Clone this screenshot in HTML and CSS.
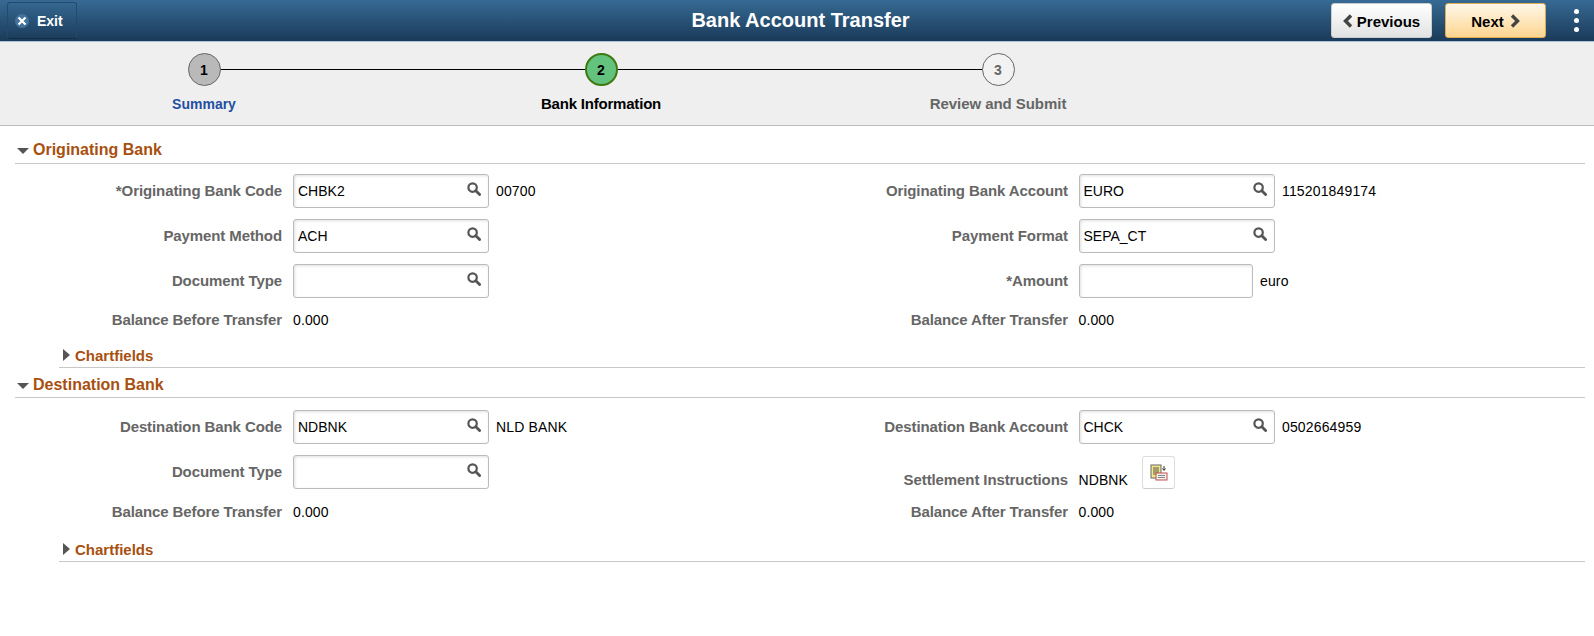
FILE: index.html
```html
<!doctype html>
<html>
<head>
  <title>Bank Account Transfer</title>
  <link rel="stylesheet" href="styles.css">
</head>
<body>
  <svg class="defs" width="0" height="0">
    <symbol id="search" viewBox="0 0 14 14">
      <circle cx="5.6" cy="5.6" r="4.2" fill="none" stroke="#555" stroke-width="2.2"></circle>
      <path d="M8.8 8.8 L12.6 12.6" stroke="#555" stroke-width="2.8" stroke-linecap="round"></path>
    </symbol>
  </svg>

  <div class="banner">
    <a class="exit">
      <span class="exit-icon">
        <svg width="10" height="10" viewBox="0 0 10 10"><path d="M1.5 1.5 L8.5 8.5 M8.5 1.5 L1.5 8.5" stroke="#fff" stroke-width="2.2"></path></svg>
      </span>
      Exit
    </a>
    <div class="page-title">Bank Account Transfer</div>
    <div class="banner-right">
      <a class="btn btn-prev">
        <svg width="10" height="14" viewBox="0 0 10 14"><path d="M8 1.5 L2.5 7 L8 12.5" fill="none" stroke="#444" stroke-width="3.4"></path></svg>
        Previous
      </a>
      <a class="btn btn-next">
        Next
        <svg width="10" height="14" viewBox="0 0 10 14"><path d="M2 1.5 L7.5 7 L2 12.5" fill="none" stroke="#444" stroke-width="3.4"></path></svg>
      </a>
      <div class="dots"><i></i><i></i><i></i></div>
    </div>
  </div>

  <div class="train">
    <div class="step step-done">
      <div class="bubble">1</div>
      <div class="step-label">Summary</div>
    </div>
    <div class="step step-current">
      <div class="bubble">2</div>
      <div class="step-label">Bank Information</div>
    </div>
    <div class="step step-next">
      <div class="bubble">3</div>
      <div class="step-label">Review and Submit</div>
    </div>
  </div>

  <div class="section">
    <h2 class="section-head"><span class="arrow-down"></span>Originating Bank</h2>
    <div class="fields">
      <div class="field">
        <label>*Originating Bank Code</label>
        <div class="prompt"><span>CHBK2</span><svg><use href="#search"></use></svg></div>
        <span class="value">00700</span>
      </div>
      <div class="field">
        <label>Originating Bank Account</label>
        <div class="prompt"><span>EURO</span><svg><use href="#search"></use></svg></div>
        <span class="value">115201849174</span>
      </div>
      <div class="field">
        <label>Payment Method</label>
        <div class="prompt"><span>ACH</span><svg><use href="#search"></use></svg></div>
      </div>
      <div class="field">
        <label>Payment Format</label>
        <div class="prompt"><span>SEPA_CT</span><svg><use href="#search"></use></svg></div>
      </div>
      <div class="field">
        <label>Document Type</label>
        <div class="prompt"><span></span><svg><use href="#search"></use></svg></div>
      </div>
      <div class="field">
        <label>*Amount</label>
        <div class="prompt prompt-amount"></div>
        <span class="value">euro</span>
      </div>
      <div class="field field-short">
        <label>Balance Before Transfer</label>
        <span class="text">0.000</span>
      </div>
      <div class="field field-short">
        <label>Balance After Transfer</label>
        <span class="text">0.000</span>
      </div>
    </div>
    <div class="sub-head"><span class="arrow-right"></span>Chartfields</div>
  </div>

  <div class="section">
    <h2 class="section-head"><span class="arrow-down"></span>Destination Bank</h2>
    <div class="fields">
      <div class="field">
        <label>Destination Bank Code</label>
        <div class="prompt"><span>NDBNK</span><svg><use href="#search"></use></svg></div>
        <span class="value">NLD BANK</span>
      </div>
      <div class="field">
        <label>Destination Bank Account</label>
        <div class="prompt"><span>CHCK</span><svg><use href="#search"></use></svg></div>
        <span class="value">0502664959</span>
      </div>
      <div class="field">
        <label>Document Type</label>
        <div class="prompt"><span></span><svg><use href="#search"></use></svg></div>
      </div>
      <div class="field field-settle">
        <label>Settlement Instructions</label>
        <span class="text">NDBNK</span>
        <a class="icon-btn">
          <svg width="18" height="18" viewBox="0 0 18 18">
            <rect x="1" y="1" width="10" height="13" fill="#f4e88a" stroke="#666"></rect>
            <path d="M3 4 H9 M3 6 H9 M3 8 H9 M3 10 H6" stroke="#555"></path>
            <path d="M14 2 V6 M12.5 4.5 L14 6.5 L15.5 4.5" fill="none" stroke="#333"></path>
            <rect x="6" y="9" width="11" height="7" fill="#f3f0ee" stroke="#c0504d"></rect>
            <path d="M8 11.5 H15 M8 13.5 H15" stroke="#888"></path>
          </svg>
        </a>
      </div>
      <div class="field field-short field-low">
        <label>Balance Before Transfer</label>
        <span class="text">0.000</span>
      </div>
      <div class="field field-short field-low">
        <label>Balance After Transfer</label>
        <span class="text">0.000</span>
      </div>
    </div>
    <div class="sub-head"><span class="arrow-right"></span>Chartfields</div>
  </div>
</body>
</html>
```

FILE: styles.css
```css
body {
  margin: 0;
  font-family: "Liberation Sans", Arial, sans-serif;
  font-size: 14px;
  color: #000;
  background: #fff;
}
.defs {
  position: absolute;
}

/* banner */
.banner {
  height: 41px;
  box-sizing: border-box;
  display: flex;
  align-items: center;
  padding-left: 7px;
  background: linear-gradient(#366a94, #1a3a58);
  position: relative;
}
.exit {
  width: 70px;
  height: 37px;
  box-sizing: border-box;
  display: flex;
  align-items: center;
  padding-left: 7px;
  gap: 8px;
  color: #fff;
  font-size: 14px;
  font-weight: bold;
  border: 1px solid #24496b;
  border-bottom: 1px dotted #0c1f30;
  border-radius: 3px;
}
.exit-icon {
  width: 14px;
  height: 14px;
  border-radius: 50%;
  background: #41739c;
  display: flex;
  align-items: center;
  justify-content: center;
}
.page-title {
  position: absolute;
  left: 7px;
  right: 0;
  top: 8px;
  text-align: center;
  color: #fff;
  font-size: 20px;
  line-height: 24px;
  font-weight: bold;
  pointer-events: none;
}
.banner-right {
  margin-left: auto;
  display: flex;
  align-items: center;
}
.btn {
  width: 101px;
  height: 35px;
  box-sizing: border-box;
  padding-top: 1px;
  display: flex;
  align-items: center;
  justify-content: center;
  gap: 4px;
  font-size: 15px;
  font-weight: bold;
  border-radius: 3px;
}
.btn-prev {
  background: linear-gradient(#fff, #e2e2e2);
  border: 1px solid #ccc;
  margin-right: 13px;
}
.btn-next {
  background: linear-gradient(#fff8ea, #fdd590);
  border: 1px solid #e0ad55;
  gap: 6px;
}
.dots {
  width: 48px;
  display: flex;
  flex-direction: column;
  align-items: center;
  gap: 4px;
  padding-left: 12px;
  box-sizing: border-box;
}
.dots i {
  width: 5px;
  height: 5px;
  border-radius: 50%;
  background: #fff;
}

/* train stop */
.train {
  height: 85px;
  box-sizing: border-box;
  border-top: 1px solid #a9c3d8;
  border-bottom: 1px solid #bbb;
  background: #efefef;
  display: grid;
  grid-template-columns: 397px 397px 200px;
  padding-left: 104px;
  position: relative;
}
.train::before {
  content: "";
  position: absolute;
  left: 204px;
  width: 794px;
  top: 27px;
  border-top: 1px solid #000;
}
.step {
  width: 200px;
  padding-top: 11px;
  display: flex;
  flex-direction: column;
  align-items: center;
  position: relative;
  font-weight: bold;
}
.bubble {
  width: 33px;
  height: 33px;
  box-sizing: border-box;
  border-radius: 50%;
  border: 1px solid #666;
  display: flex;
  align-items: center;
  justify-content: center;
  font-size: 14px;
}
.step-label {
  margin-top: 9px;
  line-height: 18px;
  font-size: 15px;
}
.step-done .bubble {
  background: #b9b9b9;
}
.step-done .step-label {
  color: #1f4fa0;
  font-size: 14px;
}
.step-current .bubble {
  background: #63c27e;
  border: 2px solid #3f7a10;
}
.step-current .step-label {
  letter-spacing: -0.2px;
}
.step-next .bubble {
  background: #f2f2f2;
  color: #666;
}
.step-next .step-label {
  color: #666;
  letter-spacing: -0.05px;
}

/* sections */
.section-head {
  margin: 0 9px 0 15px;
  box-sizing: border-box;
  padding: 15px 0 4px;
  display: flex;
  align-items: center;
  font-size: 16px;
  line-height: 18px;
  color: #a8500f;
  border-bottom: 1px solid #c8c8c8;
}
.section + .section .section-head {
  padding: 8px 0 3px;
}
.arrow-down {
  width: 0;
  height: 0;
  border-left: 6px solid transparent;
  border-right: 6px solid transparent;
  border-top: 6px solid #555;
  margin: 2px 4px 0 2px;
}
.arrow-right {
  width: 0;
  height: 0;
  border-top: 6px solid transparent;
  border-bottom: 6px solid transparent;
  border-left: 7px solid #555;
  margin-left: 4px;
  margin-right: 5px;
}
.fields {
  display: grid;
  grid-template-columns: 786px 1fr;
  padding-top: 4px;
}
.section + .section .fields {
  padding-top: 6px;
}
.field {
  display: flex;
  align-items: center;
  height: 45px;
}
.field label {
  width: 282px;
  margin-right: 11px;
  text-align: right;
  font-size: 15px;
  letter-spacing: -0.1px;
  font-weight: bold;
  color: #666;
}
.field:nth-child(even) label {
  margin-right: 10.5px;
}
.field-short {
  height: 33px;
}
.field-low {
  margin-top: 1px;
}
.field-settle {
  padding-top: 16px;
  box-sizing: border-box;
}
.prompt {
  width: 196px;
  height: 34px;
  box-sizing: border-box;
  border: 1px solid #bbb;
  border-radius: 3px;
  background: #fff;
  box-shadow: inset 1px 1px 3px rgba(0, 0, 0, 0.12);
  display: flex;
  align-items: center;
  justify-content: space-between;
  padding: 0 7px 0 4px;
}
.prompt svg {
  width: 14px;
  height: 14px;
  margin-top: -3px;
}
.prompt-amount {
  width: 174px;
}
.value {
  margin-left: 7px;
  letter-spacing: 0.15px;
}
.field:nth-child(even) .value {
  margin-left: 7.5px;
}
.text {
  letter-spacing: 0.1px;
}
.icon-btn {
  width: 33px;
  height: 33px;
  box-sizing: border-box;
  border: 1px solid #ddd;
  border-bottom-color: #ccc;
  border-radius: 3px;
  margin: -14px 0 0 14px;
  display: flex;
  align-items: center;
  justify-content: center;
  background: #fff;
}
.sub-head {
  margin: 9px 9px 0 59px;
  height: 23px;
  box-sizing: border-box;
  padding-bottom: 2px;
  border-bottom: 1px solid #c8c8c8;
  display: flex;
  align-items: center;
  font-size: 15px;
  color: #a8500f;
  font-weight: bold;
}
.section + .section .sub-head {
  margin-top: 11px;
}
```
